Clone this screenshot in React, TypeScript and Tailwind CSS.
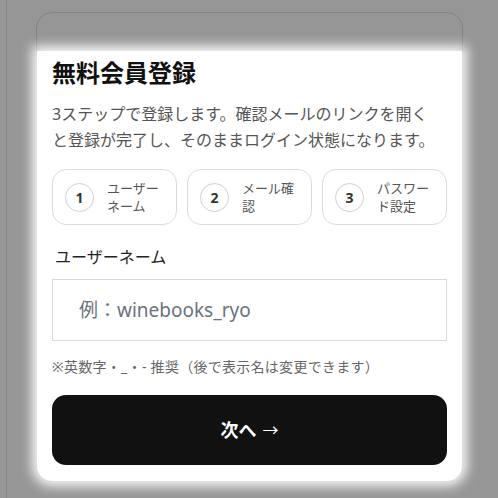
import React from 'react';

const steps = [
  { no: 1, label: 'ユーザーネーム' },
  { no: 2, label: 'メール確認' },
  { no: 3, label: 'パスワード設定' },
];

const font = { fontFamily: '"Noto Sans", "Noto Sans CJK JP", sans-serif' };

export default function App() {
  return (
    <div className="h-[498px] w-[498px] overflow-hidden bg-white pl-[6px]" style={font}>
      <div className="h-full border-l border-[#e2e2e2] pt-[12px] pl-[29px]">
        {/* Card */}
        <div className="w-[427px] rounded-2xl border border-[#dedede] bg-white pt-[38px]">
          {/* Spotlighted step */}
          <div className="relative z-10 rounded-b-[15px] bg-white px-[15px] pt-[6px] pb-4 shadow-[0_0_12px_5px_rgba(255,255,255,0.95),0_0_0_9999px_rgba(0,0,0,0.41)]">
            <h2 className="text-[24px] font-bold leading-[32px] text-[#111]">無料会員登録</h2>
            <p className="mt-3 text-[16px] leading-[26px] text-[#555]">
              3ステップで登録します。確認メールのリンクを開く
              <br />
              と登録が完了し、そのままログイン状態になります。
            </p>

            <div className="mt-4 grid grid-cols-3 gap-[10px]">
              {steps.map((s) => (
                <div
                  key={s.no}
                  className="flex h-[56px] items-center gap-[13px] rounded-[14px] border border-[#dcdcdc] pl-3 pr-2"
                >
                  <div className="flex h-[29px] w-[29px] shrink-0 items-center justify-center rounded-full border border-[#cfcfcf] text-[14px] font-bold text-[#333]">
                    {s.no}
                  </div>
                  <span className="w-[54px] text-[13px] leading-[18px] text-[#555]">{s.label}</span>
                </div>
              ))}
            </div>

            <label className="mt-5 block pl-[3px] text-[16px] leading-[24px] text-[#222]">ユーザーネーム</label>
            <input
              className="mt-2.5 block h-[62px] w-full border border-[#d9d9d9] bg-white pl-[26px] text-[19px] text-[#222] outline-none placeholder:text-[#6b7280]"
              placeholder="例：winebooks_ryo"
              style={font}
            />
            <p className="mt-4 text-[14px] leading-[20px] tracking-[0.02em] text-[#666]">
              ※英数字・_・- 推奨（後で表示名は変更できます）
            </p>

            <button
              className="mt-[18px] flex h-[70px] w-full items-center justify-center gap-1.5 rounded-[14px] bg-[#111] text-white"
              style={font}
            >
              <span className="text-[18px] font-bold">次へ</span>
              <span className="text-[16px]">→</span>
            </button>
          </div>
        </div>
      </div>
    </div>
  );
}
